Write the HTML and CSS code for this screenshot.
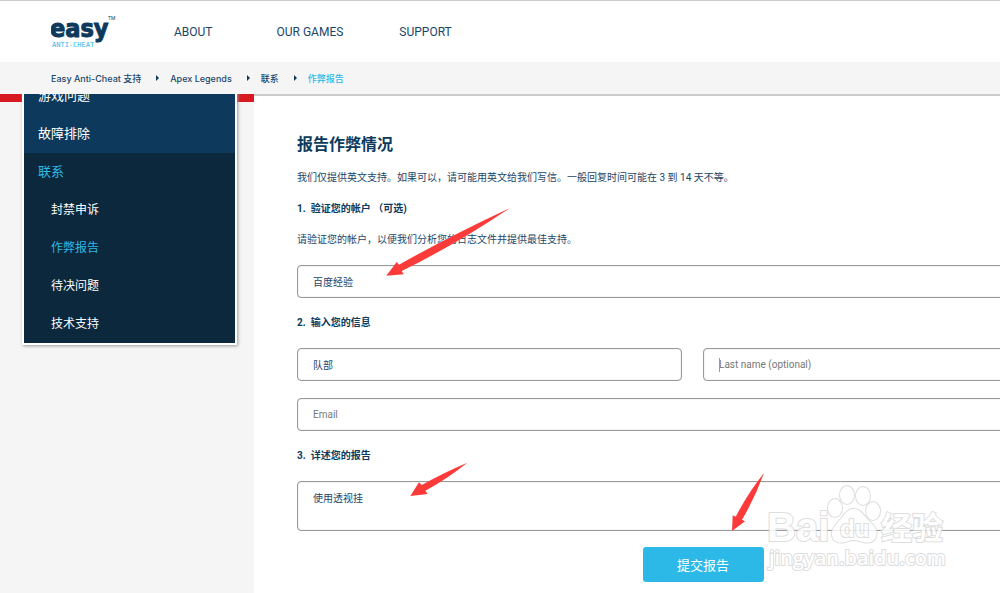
FILE: index.html
```html
<!DOCTYPE html>
<html lang="zh-CN">
<head>
<meta charset="utf-8">
<meta name="viewport" content="width=device-width, initial-scale=1">
<title>报告作弊情况</title>
<link rel="stylesheet" href="styles.css">
</head>
<body>
<header class="header">
  <div class="topbar">
    <a class="logo" href="#" aria-label="Easy Anti-Cheat">
      <svg width="68" height="36" viewBox="0 0 68 36">
        <text class="logo-name" x="-1" y="23">easy</text>
        <text class="logo-tm" x="57" y="6">TM</text>
        <text class="logo-sub" x="1" y="33">ANTI-CHEAT</text>
      </svg>
    </a>
    <nav class="nav">
      <a href="#">ABOUT</a>
      <a href="#">OUR GAMES</a>
      <a href="#">SUPPORT</a>
    </nav>
  </div>
  <nav class="crumbs" aria-label="breadcrumb">
    <a href="#">Easy Anti-Cheat 支持</a>
    <a href="#">Apex Legends</a>
    <a href="#">联系</a>
    <a class="current" href="#">作弊报告</a>
  </nav>
</header>
<div class="page">
  <aside class="side">
    <nav class="menu">
      <a href="#">游戏问题</a>
      <a href="#">故障排除</a>
      <div class="submenu">
        <a class="active" href="#">联系</a>
        <a class="child" href="#">封禁申诉</a>
        <a class="child active" href="#">作弊报告</a>
        <a class="child" href="#">待决问题</a>
        <a class="child" href="#">技术支持</a>
      </div>
    </nav>
  </aside>
  <main class="main">
    <form class="form">
      <h1>报告作弊情况</h1>
      <p>我们仅提供英文支持。如果可以，请可能用英文给我们写信。一般回复时间可能在 3 到 14 天不等。</p>
      <h2><span>1.</span><label for="account">验证您的帐户 （可选)</label></h2>
      <p>请验证您的帐户，以便我们分析您的日志文件并提供最佳支持。</p>
      <input class="field" id="account" type="text" value="百度经验">
      <h2><span>2.</span><span>输入您的信息</span></h2>
      <div class="names">
        <input class="field" type="text" aria-label="First name" value="队部">
        <div class="focused"><input class="field" type="text" aria-label="Last name" placeholder="Last name (optional)"></div>
      </div>
      <input class="field email" type="email" aria-label="Email" placeholder="Email">
      <h2><span>3.</span><label for="details">详述您的报告</label></h2>
      <textarea class="field area" id="details">使用透视挂</textarea>
      <div class="actions"><button class="submit" type="button">提交报告</button></div>
    </form>
  </main>
</div>
<svg class="overlay" width="1000" height="593" viewBox="0 0 1000 593" aria-hidden="true">
  <g class="watermark">
    <text class="wm-latin" x="767" y="541">Bai</text>
    <ellipse cx="847" cy="495" rx="7" ry="9"/>
    <ellipse cx="863" cy="496" rx="7" ry="9"/>
    <ellipse cx="835" cy="508" rx="7" ry="9"/>
    <ellipse cx="873" cy="511" rx="7" ry="9"/>
    <path d="M853.500 509C861 509 864 516 869 521C874 526 877 529 876.500 534C876 540 872 543 866 542.500C861 542 858 540 854 540C850 540 847 542 842 542.500C836 543 832 540 832 534C832 528 835 526 839 521C844 516 846 509 853.500 509Z"/>
    <text class="wm-du" x="840" y="537">du</text>
    <text class="wm-cjk" x="881" y="539">经验</text>
    <text class="wm-url" x="769" y="565">jingyan.baidu.com</text>
  </g>
  <g fill="#fb3b3a">
    <path d="M386.300 275.700L396.700 262L399 264.700Q450 236 510 208Q455 245 401.700 271L403.700 274.300Z"/>
    <path d="M410.300 496L419 482.300L421.700 485Q443 473 467.300 462.700Q447 479 425.300 490.700L427.700 494Z"/>
    <path d="M732 531L732.700 515.300L735.700 516.700Q748 493 764 473Q755 498 742 519.700L745 521.300Z"/>
  </g>
</svg>
</body>
</html>
```
FILE: styles.css
```css
* { box-sizing: border-box; }
body {
  margin: 0;
  min-height: 100vh;
  display: flex;
  flex-direction: column;
  position: relative;
  overflow: hidden;
  background: #fff;
  color: #1c4668;
  font-family: Roboto, "Noto Sans CJK SC", sans-serif;
  font-size: 10px;
}
a { color: inherit; text-decoration: none; }
.header { border-top: 1px solid #ccc; }
.topbar { display: flex; align-items: center; height: 61px; padding-left: 51px; }
.logo { display: flex; width: 123px; }
.logo-name { font: bold 25px "DejaVu Sans Condensed", "DejaVu Sans", sans-serif; fill: #0d3a5c; stroke: #0d3a5c; stroke-width: 1px; }
.logo-tm { font: 5px Roboto, sans-serif; fill: #0d3a5c; }
.logo-sub { font: 7px "DejaVu Sans Mono", monospace; fill: #2cb9e8; }
.nav { display: flex; gap: 64px; font-size: 12px; }
.nav a:last-child { margin-left: -8px; }
.crumbs {
  display: flex;
  align-items: center;
  height: 32px;
  padding-left: 51px;
  background: #f5f5f5;
  font-family: Inter, "Noto Sans CJK SC", sans-serif;
  font-size: 9px;
  font-weight: 500;
}
.crumbs a { display: flex; align-items: center; white-space: pre; }
.crumbs a + a::before {
  content: "";
  margin: 0 11px 0 15px;
  border: 3px solid transparent;
  border-left-color: #0d3a5c;
  border-right: 0;
}
.crumbs .current { color: #2cb9e8; }
.page { flex: 1; display: flex; align-items: stretch; overflow: hidden; }
.side {
  flex: none;
  width: 254px;
  padding: 0 17px 0 22px;
  background: linear-gradient(#d81921 8px, #f5f5f5 8px);
}
.menu {
  margin-top: -19px;
  border: 2px solid #fff;
  background: #0d3a5c;
  box-shadow: 1px 1px 3px #999;
  color: #fff;
  font-size: 13px;
}
.menu a { display: block; height: 38px; padding-left: 14px; line-height: 38px; }
.submenu { background: #0c283c; }
.menu .child { padding-left: 27px; font-size: 12px; }
.menu .active { color: #2cb9e8; }
.main {
  flex: 1;
  min-width: 0;
  padding: 37px 0 9px 43px;
  border-top: 2px solid #ccc;
}
.form { min-width: 791px; }
h1 { margin: 0 0 11px; font-size: 16px; line-height: 24px; color: #0d3a5c; }
h2 {
  display: flex;
  gap: 5px;
  margin: 11px 0;
  font-size: 10px;
  line-height: 20px;
  color: #0d3a5c;
  white-space: pre;
}
p { margin: 0; line-height: 20px; }
p + .field { margin-top: 15px; }
.field {
  display: block;
  width: 100%;
  height: 33px;
  padding: 0 15px;
  border: 1px solid #999;
  border-radius: 4px;
  background: #fff;
  box-shadow: inset 0 0 1px #999;
  color: #1c4668;
  font: inherit;
}
.field::placeholder { color: #777; }
.field + h2 { margin: 15px 0; }
.names { display: grid; grid-template-columns: 1fr 1fr; gap: 21px; }
.focused { position: relative; }
.focused::before {
  content: "";
  position: absolute;
  left: 16px;
  top: 10px;
  width: 1px;
  height: 14px;
  background: #999;
}
.email { margin-top: 17px; }
.area { height: 50px; padding-top: 8px; line-height: 17px; resize: none; overflow: hidden; }
.actions { display: flex; justify-content: center; padding: 16px 0 0 21px; }
.submit {
  width: 121px;
  height: 35px;
  border: 0;
  border-radius: 3px;
  background: #2cb9e8;
  color: #fff;
  font: 13px Roboto, "Noto Sans CJK SC", sans-serif;
}
.overlay { position: absolute; left: 0; top: 0; pointer-events: none; }
.watermark { fill: #fff; stroke: #d8d8d8; stroke-width: 2px; paint-order: stroke; opacity: .85; }
.wm-latin { font: bold 40px "Liberation Sans", sans-serif; }
.wm-du { font: bold 24px "Liberation Sans", sans-serif; }
.wm-cjk { font: bold 31px "Noto Sans CJK SC", sans-serif; }
.wm-url { font: 600 20px "Open Sans", sans-serif; }
```
